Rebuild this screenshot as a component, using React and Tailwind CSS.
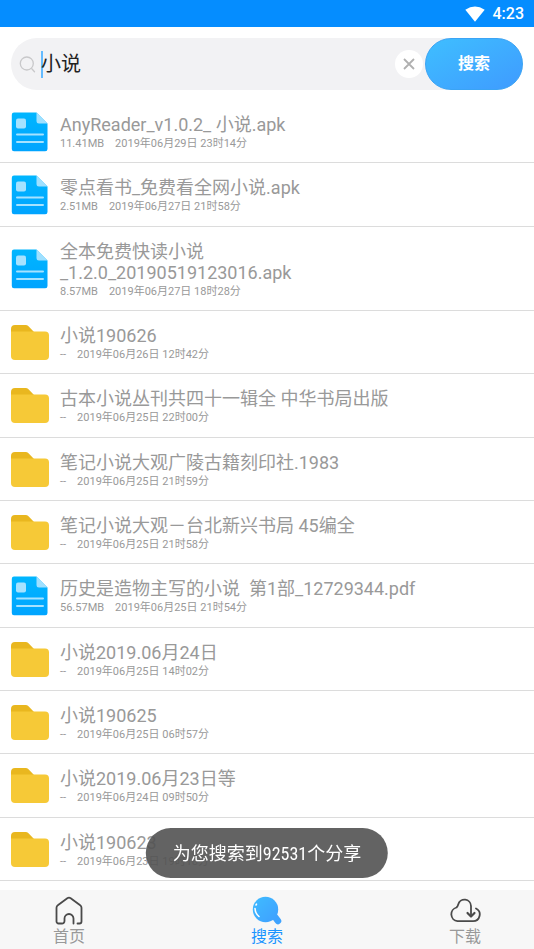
import { useState } from "react";

const items = [
  { kind: "file", name: "AnyReader_v1.0.2_ 小说.apk", size: "11.41MB", date: "2019年06月29日 23时14分" },
  { kind: "file", name: "零点看书_免费看全网小说.apk", size: "2.51MB", date: "2019年06月27日 21时58分" },
  { kind: "file", name: "全本免费快读小说\n_1.2.0_20190519123016.apk", size: "8.57MB", date: "2019年06月27日 18时28分" },
  { kind: "folder", name: "小说190626", size: "--", date: "2019年06月26日 12时42分" },
  { kind: "folder", name: "古本小说丛刊共四十一辑全 中华书局出版", size: "--", date: "2019年06月25日 22时00分" },
  { kind: "folder", name: "笔记小说大观广陵古籍刻印社.1983", size: "--", date: "2019年06月25日 21时59分" },
  { kind: "folder", name: "笔记小说大观－台北新兴书局 45编全", size: "--", date: "2019年06月25日 21时58分" },
  { kind: "file", name: "历史是造物主写的小说  第1部_12729344.pdf", size: "56.57MB", date: "2019年06月25日 21时54分" },
  { kind: "folder", name: "小说2019.06月24日", size: "--", date: "2019年06月25日 14时02分" },
  { kind: "folder", name: "小说190625", size: "--", date: "2019年06月25日 06时57分" },
  { kind: "folder", name: "小说2019.06月23日等", size: "--", date: "2019年06月24日 09时50分" },
  { kind: "folder", name: "小说190623", size: "--", date: "2019年06月23日 19时18分" },
];

function FileIcon() {
  return (
    <svg className="h-10 w-10 shrink-0" viewBox="0 0 40 40" aria-hidden="true">
      <defs>
        <linearGradient id="fileFill" x1="0" y1="0" x2="0" y2="1">
          <stop offset="0" stopColor="#00b6ff" />
          <stop offset="1" stopColor="#00a4ff" />
        </linearGradient>
      </defs>
      <path d="M4 0.5H26.5L37.5 11.5V37a2.3 2.3 0 0 1-2.3 2.3H4A2.3 2.3 0 0 1 1.8 37V2.8A2.3 2.3 0 0 1 4 0.5Z" fill="url(#fileFill)" />
      <path d="M26.5 0.5L37.5 11.5H29a2.5 2.5 0 0 1-2.5-2.5Z" fill="#9fe0ff" />
      <rect x="6" y="6.5" width="10" height="10" rx="2" fill="#a6e2ff" />
      <path d="M7 22.5H33M7 30H33" stroke="#a6e2ff" strokeWidth="2" strokeLinecap="round" />
    </svg>
  );
}

function FolderIcon() {
  return (
    <svg className="h-10 w-10 shrink-0" viewBox="0 0 40 40" aria-hidden="true">
      <path d="M1 6A4 4 0 0 1 5 2H15.5a4 4 0 0 1 3 1.3L24 9V15H1Z" fill="#e9b71f" />
      <path d="M1 8.500H35a4 4 0 0 1 4 4V33a4 4 0 0 1-4 4H5a4 4 0 0 1-4-4Z" fill="#f6c937" />
    </svg>
  );
}

function HomeIcon() {
  return (
    <svg className="h-[30px] w-8" viewBox="0 0 32 30" fill="none" stroke="#4a4a4a" strokeWidth="1.8" strokeLinecap="round" strokeLinejoin="round" aria-hidden="true">
      <path d="M8.500 27.500H5.500a2 2 0 0 1-2-2V11.800a3 3 0 0 1 1.300-2.500L14.300 2.200a3 3 0 0 1 3.400 0L27.200 9.300a3 3 0 0 1 1.300 2.500V25.500a2 2 0 0 1-2 2H24.500M8.500 27.500a2.500 2.500 0 0 0 3-2.500V22.500a4.500 4.500 0 0 1 9 0V27.500" />
    </svg>
  );
}

function SearchBallIcon() {
  return (
    <svg className="h-[30px] w-8" viewBox="0 0 32 30" aria-hidden="true">
      <defs>
        <linearGradient id="ballFill" x1="0" y1="0" x2="1" y2="1">
          <stop offset="0" stopColor="#3fbcff" />
          <stop offset="1" stopColor="#3f9fff" />
        </linearGradient>
      </defs>
      <path d="M24 21L27 25" stroke="#3fa3ff" strokeWidth="6.500" strokeLinecap="round" />
      <circle cx="14.500" cy="13.500" r="12.700" fill="url(#ballFill)" />
      <path d="M4 12.500C4.200 16 5.500 18.500 8 20.500M5 9L5.500 8.200" stroke="#fff" strokeWidth="1.600" strokeLinecap="round" fill="none" />
    </svg>
  );
}

function CloudIcon() {
  return (
    <svg className="h-[30px] w-8" viewBox="0 0 32 30" fill="none" stroke="#4a4a4a" strokeWidth="1.800" strokeLinecap="round" strokeLinejoin="round" aria-hidden="true">
      <path d="M22 19V10A6.500 6.500 0 0 0 9.200 8.500A6 6 0 0 1 7.500 11.500A7 7 0 0 0 8.500 25.200H24A6.700 6.700 0 0 0 27 12.500" />
      <path d="M18.500 17L22 20.500L25.500 17" strokeWidth="2.200" />
    </svg>
  );
}

const tabs = [
  { label: "首页", Icon: HomeIcon },
  { label: "搜索", Icon: SearchBallIcon },
  { label: "下载", Icon: CloudIcon },
];

export default function App() {
  const [query, setQuery] = useState("小说");
  const [active, setActive] = useState("搜索");

  return (
    <div className="flex min-h-screen flex-col bg-white font-['Roboto','Noto_Sans_CJK_SC',sans-serif] text-[#999999]">
      <header className="flex h-[27px] items-center justify-end gap-2 bg-[#058dff] pr-[10px] text-white">
        <svg className="h-4 w-5" viewBox="0 0 20 16" aria-hidden="true">
          <path d="M0.300 3.800Q10-3 19.700 3.800L10 15.800Z" fill="#fff" />
        </svg>
        <span className="text-base font-medium">4:23</span>
      </header>

      <form className="mx-[11px] mt-[11px] flex h-[52px] items-center rounded-full bg-[#f2f2f4]" onSubmit={(e) => e.preventDefault()}>
        <label htmlFor="query" className="ml-2 mr-[5px]">
          <svg className="h-[17px] w-[17px]" viewBox="0 0 17 17" fill="none" stroke="#c8c8ca" strokeWidth="1.300" strokeLinecap="round" aria-label="搜索">
            <circle cx="7.800" cy="7.500" r="6.500" />
            <path d="M12.800 12.800L15.500 15.800" />
          </svg>
        </label>
        <span className="h-[27px] w-[2px] bg-[#63bbff]" />
        <input
          id="query"
          className="-ml-[2px] min-w-0 flex-1 bg-transparent text-xl text-[#222222] outline-none"
          value={query}
          onChange={(e) => setQuery(e.target.value)}
        />
        <button type="button" aria-label="清除" className="mr-[2px] flex h-7 w-7 items-center justify-center rounded-full bg-white" onClick={() => setQuery("")}>
          <svg className="h-3 w-3" viewBox="0 0 12 12" stroke="#b0b0b0" strokeWidth="1.800" aria-hidden="true">
            <path d="M1 1L11 11M11 1L1 11" />
          </svg>
        </button>
        <button type="submit" className="h-full w-[98px] rounded-full border border-[#3ba4f5] bg-linear-to-br from-[#3fbfff] to-[#3f9aff] bg-origin-border text-base font-bold text-white">
          搜索
        </button>
      </form>

      <main className="flex flex-1 flex-col pb-[9px] pt-[10px]">
        <ul className="flex flex-1 flex-col">
          {items.map(({ kind, name, size, date }) => (
            <li key={name} className="flex grow items-center gap-[10px] border-b border-[#dcdcdc] px-[10px] pb-[9px] pt-[11px]">
              {kind === "file" ? <FileIcon /> : <FolderIcon />}
              <div className="min-w-0 pt-[3px]">
                <h2 className="whitespace-pre-wrap text-[18px] leading-[21px]">{name}</h2>
                <p className="flex gap-[11px] text-[11px] leading-[18px]">
                  <span>{size}</span>
                  <span>{date}</span>
                </p>
              </div>
            </li>
          ))}
        </ul>
      </main>

      <nav className="flex h-[59px] justify-between bg-[#f7f7f7]">
        {tabs.map(({ label, Icon }) => (
          <button
            key={label}
            type="button"
            onClick={() => setActive(label)}
            className={`flex w-[138px] flex-col items-center pt-[6px] text-base leading-[22px] ${active === label ? "text-[#1a94ff]" : ""}`}
          >
            <Icon />
            {label}
          </button>
        ))}
      </nav>

      <div role="status" className="fixed bottom-[71px] left-1/2 flex h-[50px] -translate-x-1/2 items-center whitespace-nowrap rounded-full bg-[#525252]/90 px-[27px] font-['Roboto_Condensed','Liberation_Sans_Narrow','Noto_Sans_CJK_SC',sans-serif] text-[18px] text-white">
        为您搜索到92531个分享
      </div>
    </div>
  );
}
